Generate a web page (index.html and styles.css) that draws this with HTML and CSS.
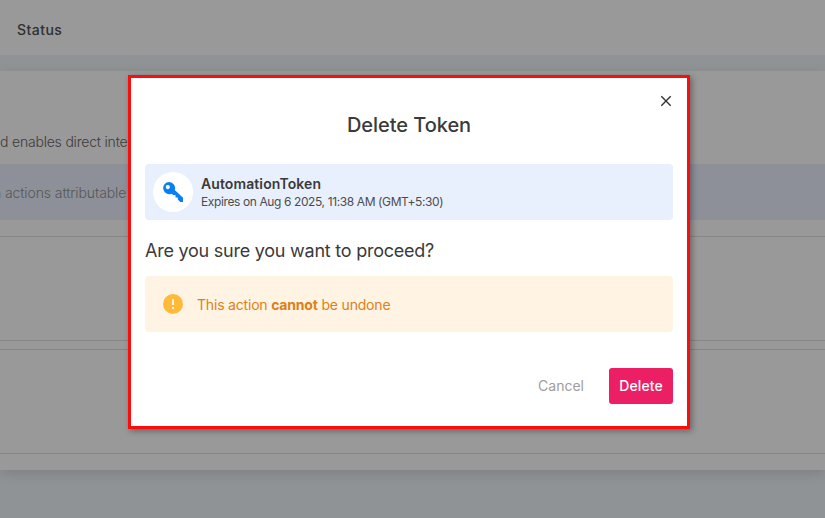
FILE: index.html
```html
<!DOCTYPE html>
<html lang="en">
<head>
<meta charset="utf-8">
<title>Delete Token</title>
<link rel="stylesheet" href="styles.css">
</head>
<body>
<div class="page">
  <header class="tabs"><span class="status">Status</span></header>
  <main class="panel">
    <p class="intro"><span class="intro-text">d enables direct inte</span></p>
    <div class="notice"><span class="notice-text">n actions attributable</span></div>
    <section class="card"></section>
    <section class="card"></section>
  </main>
</div>
<div class="backdrop">
  <div class="modal" role="dialog" aria-modal="true">
    <button class="close" aria-label="Close"><svg width="12" height="12" viewBox="0 0 12 12"><path d="M1.3 1.3 10.7 10.7M10.7 1.3 1.3 10.7" fill="none" stroke="#333" stroke-width="1.4"/></svg></button>
    <h1 class="title"><span>Delete Token</span></h1>
    <div class="token">
      <div class="token-icon"><svg width="22" height="22" viewBox="0 0 22 22"><path fill="#087ff5" fill-rule="evenodd" d="M7.2 1a6.1 6.1 0 1 0 2.5 11.7l1.4 1.4h2.4v2.3h2.3v2l2.4 2.5H21v-4.2l-8.2-7.6A6.1 6.1 0 0 0 7.2 1ZM5.8 4a2.1 2.1 0 1 1 0 4.2A2.1 2.1 0 0 1 5.8 4Z"/></svg></div>
      <div class="token-info">
        <div class="token-name"><span>AutomationToken</span></div>
        <div class="token-expiry"><span>Expires on Aug 6 2025, 11:38 AM (GMT+5:30)</span></div>
      </div>
    </div>
    <p class="question"><span>Are you sure you want to proceed?</span></p>
    <div class="warning">
      <svg width="20" height="20" viewBox="0 0 20 20"><circle cx="10" cy="10" r="10" fill="#ffbb38"/><path d="M10 5v6M10 13v2" stroke="#fff4e3" stroke-width="2"/></svg>
      <span class="warning-text">This action <b>cannot</b> be undone</span>
    </div>
    <div class="actions">
      <button class="cancel">Cancel</button>
      <button class="delete">Delete</button>
    </div>
  </div>
</div>
</body>
</html>
```
FILE: styles.css
```css
* { box-sizing: border-box; }
body { margin: 0; height: 518px; overflow: hidden; background: #eff5f8; color: #3a3a3a; font: 14px/20px Inter, "Open Sans", sans-serif; }
h1, p { margin: 0; }
button { border: 0; padding: 0; background: none; font: inherit; }
svg { display: block; flex: none; }
.page { height: 518px; }
.tabs { height: 55px; padding: 20px 0 0 17px; background: #fff; color: #505050; font-weight: 500; letter-spacing: .45px; }
.panel { margin-top: 16px; height: 399px; background: #fff; box-shadow: 0 4px 12px rgba(0, 0, 0, .12); white-space: nowrap; }
.intro { height: 93px; padding-top: 61px; color: #666; font-weight: 350; letter-spacing: -.2px; }
.notice { height: 56px; padding-top: 19px; background: #ecf1fd; color: #929292; font-weight: 350; letter-spacing: -.1px; }
.notice-text { margin-left: -7px; }
.card { height: 105px; margin-top: 8px; border: solid #dce0e1; border-width: 1px 0; }
.notice + .card { margin-top: 16px; }
.backdrop { position: absolute; inset: 0; display: flex; align-items: flex-start; background: rgba(0, 0, 0, .4); }
.modal { position: relative; width: 562px; height: 354px; margin: 75px 0 0 128px; padding: 33px 14px 0; border: 3px solid #fc0d0d; background: #fff; box-shadow: 2px 2px 6px rgba(0, 0, 0, .35); white-space: nowrap; }
.close { position: absolute; top: 17px; right: 15px; }
.title { font-size: 20px; line-height: 28px; font-weight: 500; text-align: center; letter-spacing: -.05px; }
.token { display: flex; align-items: center; gap: 8px; height: 56px; margin-top: 25px; padding: 0 8px; border-radius: 4px; background: #e9f0fd; }
.token-icon { display: flex; align-items: center; justify-content: center; width: 40px; height: 40px; border-radius: 50%; background: #fff; }
.token-name { font-weight: 600; line-height: 18px; margin-top: 1px; letter-spacing: .1px; }
.token-expiry { font-size: 12px; line-height: 18px; color: #4c4c4c; letter-spacing: -.39px; }
.question { margin-top: 18px; font-size: 18px; line-height: 26px; letter-spacing: -.24px; }
.warning { display: flex; align-items: center; gap: 14px; height: 56px; margin-top: 12px; padding-left: 18px; border-radius: 4px; background: #fff4e3; color: #dc8018; letter-spacing: -.19px; }
.warning-text { padding-top: 2px; }
.warning b { font-weight: 700; }
.actions { display: flex; justify-content: flex-end; gap: 25px; margin-top: 36px; }
.cancel { color: #9e9e9e; }
.delete { width: 64px; height: 36px; border-radius: 3px; background: #ec1e64; color: #fff; font-weight: 500; letter-spacing: .1px; }
```
